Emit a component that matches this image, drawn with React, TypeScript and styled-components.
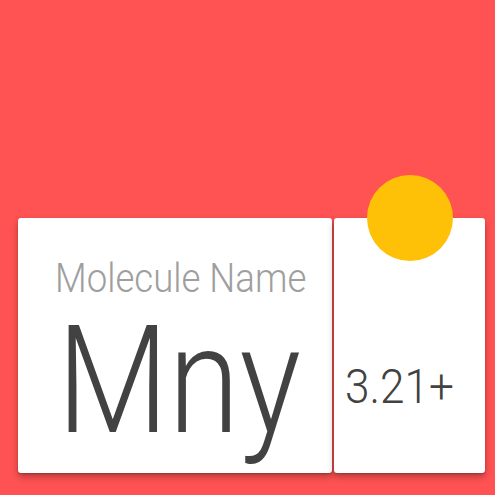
import React from 'react';
import styled, { createGlobalStyle } from 'styled-components';

const GlobalStyle = createGlobalStyle`
    html, body {
        margin:0;
        padding:0;
        background:#FF5252;
    }
    body {
        font-family: Roboto, "Noto Sans", sans-serif;
    }
`

const App = () => {
    return (
        <>
            <GlobalStyle />
            <Screen>
                <CardRow>
                    <NameCard>
                        <Label>Molecule Name</Label>
                        <Symbol>Mny</Symbol>
                    </NameCard>
                    <ChargeCard>
                        <Badge />
                        <Charge>3.21+</Charge>
                    </ChargeCard>
                </CardRow>
            </Screen>
        </>
    )
}

export default App;

const Screen = styled.div`
    width:495px;
    height:495px;
    background:#FF5252;
    display:flex;
    flex-direction:column;
    justify-content:flex-end;
    box-sizing:border-box;
    padding:0 10px 22px 18px;
    overflow:hidden;
`

const CardRow = styled.div`
    display:flex;
    flex-direction:row;
    gap:2px;
    height:255px;
`

const Card = styled.div`
    position:relative;
    background:#ffffff;
    border-radius:3px;
    box-shadow: 0 4px 7px rgba(0,0,0,0.28), 0 1px 2px rgba(0,0,0,0.2);
    box-sizing:border-box;
`

const NameCard = styled(Card)`
    width:314px;
    display:flex;
    flex-direction:column;
    padding:41px 0 0 37px;
`

const ChargeCard = styled(Card)`
    width:151px;
    display:flex;
    flex-direction:column;
    padding:144px 0 0 11px;
`

/* the reference face is a narrower Roboto Light, so squeeze it */
const Label = styled.div`
    font-weight:300;
    font-size:40px;
    line-height:40px;
    color:#9e9e9e;
    white-space:nowrap;
    transform:scaleX(0.915);
    transform-origin:left center;
`

const Symbol = styled.div`
    font-weight:300;
    font-size:150px;
    line-height:120px;
    color:#424242;
    margin-top:22px;
    margin-left:2px;
    white-space:nowrap;
    transform:scaleX(0.86);
    transform-origin:left center;
`

const Charge = styled.div`
    font-weight:300;
    font-size:49px;
    line-height:49px;
    color:#424242;
    white-space:nowrap;
    transform:scaleX(0.9);
    transform-origin:left center;
`

const Badge = styled.div`
    position:absolute;
    width:86px;
    height:86px;
    border-radius:50%;
    background:#FFC107;
    top:-43px;
    left:50%;
    transform:translate(-50%, 0);
`
